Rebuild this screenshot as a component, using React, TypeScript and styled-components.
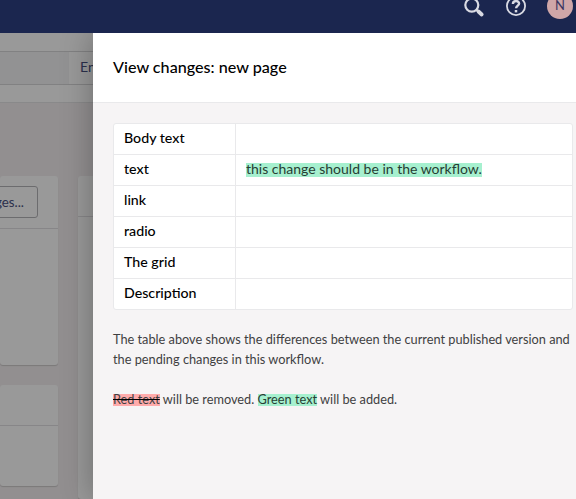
import React from "react";
import styled, { createGlobalStyle } from "styled-components";

const GlobalStyle = createGlobalStyle`
  * { box-sizing: border-box; }
  body {
    margin: 0;
    overflow: hidden;
    font-family: Lato, "Open Sans", sans-serif;
    font-size: 14px;
    line-height: 20px;
    color: #3f3f42;
  }
`;

const Shell = styled.div`
  display: flex;
  flex-direction: column;
  width: 100vw;
  height: 100vh;
  overflow: hidden;
`;

const TopBar = styled.header`
  flex: 0 0 33px;
  display: flex;
  justify-content: flex-end;
  background: #1b264f;
  color: #d9dae3;
  overflow: hidden;
`;

const BarActions = styled.div`
  display: flex;
  align-items: center;
  height: 40px;
  margin-top: -14px;
  padding-right: 3px;
`;

const BarIcon = styled.svg`
  display: block;
  width: 24px;
  height: 24px;
  margin-right: 19px;
`;

const Avatar = styled.div`
  width: 26px;
  height: 26px;
  border-radius: 50%;
  background: #cfa6a8;
  color: #3a3560;
  font-size: 13px;
  font-weight: 400;
  line-height: 25px;
  text-align: center;
`;

const Workspace = styled.div`
  position: relative;
  flex: 1;
  min-height: 0;
  overflow: hidden;
`;

const Editor = styled.main`
  height: 100%;
  display: flex;
  flex-direction: column;
  background: #f3eff0;
`;

const EditorHeader = styled.div`
  flex: 0 0 70px;
  padding: 18px 0 17px;
  background: #fff;
  border-bottom: 1px solid #e5e4e6;
`;

const NameField = styled.div`
  height: 34px;
  display: flex;
  background: #f4f4f5;
  border-top: 1px solid #d8d7d9;
  border-bottom: 1px solid #d8d7d9;
`;

const Language = styled.div`
  margin-left: 69px;
  padding: 5px 11px;
  flex: 1;
  background: #fff;
  color: #485080;
`;

const EditorColumns = styled.div`
  flex: 1;
  display: grid;
  grid-template-columns: 58px 1fr;
  column-gap: 20px;
  padding-top: 73px;
`;

const CardStack = styled.div`
  display: flex;
  flex-direction: column;
  gap: 20px;
`;

const Card = styled.section<{ $height?: number }>`
  height: ${(p) => (p.$height ? `${p.$height}px` : "100%")};
  background: #fff;
  border-radius: 3px;
  box-shadow: 0 1px 1px rgba(0, 0, 0, 0.16);
`;

const CardHead = styled.div<{ $height: number }>`
  display: flex;
  justify-content: flex-end;
  align-items: flex-start;
  height: ${(p) => p.$height}px;
  padding: 10px 20px 10px 0;
  border-bottom: 1px solid #e1e0e3;
`;

const OutlineButton = styled.button`
  flex: none;
  height: 32px;
  padding: 0 13px 1px;
  border: 1px solid #b5b4b8;
  border-radius: 3px;
  background: transparent;
  color: #485080;
  font: 13.3px/20px Lato, sans-serif;
  white-space: nowrap;
`;

const Scrim = styled.div`
  position: absolute;
  inset: 0;
  background: rgba(0, 0, 0, 0.4);
`;

const Drawer = styled.aside`
  position: absolute;
  inset: 0 0 0 93px;
  background: #f6f4f5;
  box-shadow: 0 0 30px rgba(0, 0, 0, 0.3);
`;

const DrawerHeader = styled.div`
  height: 70px;
  display: flex;
  align-items: center;
  padding: 0 20px 2px;
  background: #fff;
  border-bottom: 1px solid #e9e9eb;
`;

const Title = styled.h1`
  margin: 0;
  color: #000;
  font-size: 16.15px;
  font-weight: 500;
  line-height: 20px;
`;

const DrawerBody = styled.div`
  padding: 20px 3px 0 20px;
`;

const DiffTable = styled.div`
  width: 460px;
  background: #fff;
  border: 1px solid #e9e9eb;
  border-radius: 3px;
`;

const DiffRow = styled.div`
  display: grid;
  grid-template-columns: 122px 1fr;
  height: 31px;

  & + & { border-top: 1px solid #e9e9eb; }
  &:first-child { height: 30px; }
`;

const PropertyName = styled.div`
  padding: 4px 10px;
  border-right: 1px solid #e9e9eb;
  color: #000;
  font-size: 14.2px;
  font-weight: 500;
`;

const PropertyValue = styled.div`
  padding: 4px 10px;
`;

const Added = styled.ins<{ $compact?: boolean }>`
  display: inline-block;
  padding-bottom: 2px;
  line-height: ${(p) => (p.$compact ? 10 : 12)}px;
  background: #a6f0cf;
  color: #263d33;
  text-decoration: none;
`;

const Removed = styled.del`
  display: inline-block;
  padding-bottom: 2px;
  line-height: 10px;
  background: #ffabab;
  text-decoration: line-through #000;
`;

const Note = styled.p`
  margin: 19px 0 0;
  font-size: 12.75px;
  white-space: nowrap;

  & + & { margin-top: 20px; }
`;

const rows: { name: string; added?: string }[] = [
  { name: "Body text" },
  { name: "text", added: "this change should be in the workflow." },
  { name: "link" },
  { name: "radio" },
  { name: "The grid" },
  { name: "Description" },
];

export default function App() {
  return (
    <Shell>
      <GlobalStyle />
      <TopBar>
        <BarActions>
          <BarIcon viewBox="0 0 24 24" fill="none" stroke="currentColor">
            <circle cx="10.8" cy="11.1" r="6.5" strokeWidth="2.2" />
            <path d="M15.4 15.6l2 2" strokeWidth="2.3" />
            <path d="M17.5 17.5l3.2 3" strokeWidth="3.8" strokeLinecap="round" />
          </BarIcon>
          <BarIcon viewBox="0 0 24 24" fill="none" stroke="currentColor">
            <circle cx="12" cy="12" r="9.1" strokeWidth="1.8" />
            <path d="M8.9 9.9c0-3.7 6.2-3.7 6.2-.4 0 2.1-3 2.2-3 4.8" strokeWidth="2.4" />
            <path d="M12 16v2.4" strokeWidth="2.5" />
          </BarIcon>
          <Avatar>N</Avatar>
        </BarActions>
      </TopBar>
      <Workspace>
        <Editor>
          <EditorHeader>
            <NameField>
              <Language>En</Language>
            </NameField>
          </EditorHeader>
          <EditorColumns>
            <CardStack>
              <Card $height={189}>
                <CardHead $height={53}>
                  <OutlineButton>Changes...</OutlineButton>
                </CardHead>
              </Card>
              <Card $height={101}>
                <CardHead $height={41} />
              </Card>
            </CardStack>
            <Card>
              <CardHead $height={41} />
            </Card>
          </EditorColumns>
        </Editor>
        <Scrim />
        <Drawer>
          <DrawerHeader>
            <Title>View changes: new page</Title>
          </DrawerHeader>
          <DrawerBody>
            <DiffTable>
              {rows.map((row) => (
                <DiffRow key={row.name}>
                  <PropertyName>{row.name}</PropertyName>
                  <PropertyValue>{row.added && <Added>{row.added}</Added>}</PropertyValue>
                </DiffRow>
              ))}
            </DiffTable>
            <Note>
              The table above shows the differences between the current published version and
              <br />
              the pending changes in this workflow.
            </Note>
            <Note>
              <Removed>Red text</Removed> will be removed. <Added $compact>Green text</Added> will be added.
            </Note>
          </DrawerBody>
        </Drawer>
      </Workspace>
    </Shell>
  );
}
